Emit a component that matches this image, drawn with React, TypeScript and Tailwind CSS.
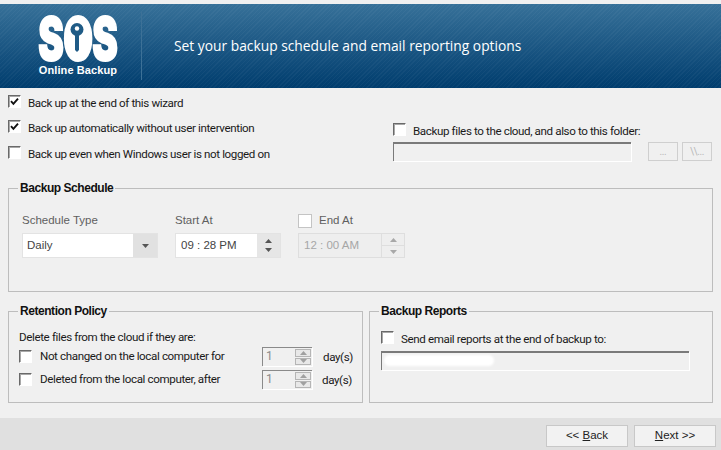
import React from "react";

function Check({ checked = false }: { checked?: boolean }) {
  return (
    <span className="flex h-[13px] w-[13px] shrink-0 items-center justify-center border-t border-l border-t-[#696969] border-l-[#696969] border-r border-b border-r-white border-b-white bg-white shadow-[inset_1px_1px_0_#a8a8a8]">
      {checked && (
        <svg width="9" height="9" viewBox="0 0 9 9">
          <path d="M1 4.2 L3.4 6.8 L8 1.6" fill="none" stroke="#111" strokeWidth="1.9" />
        </svg>
      )}
    </span>
  );
}

function Arrow({ up, color = "#555" }: { up?: boolean; color?: string }) {
  return (
    <svg width="7" height="4" viewBox="0 0 7 4">
      <path d={up ? "M3.5 0 L7 4 L0 4 Z" : "M0 0 L7 0 L3.5 4 Z"} fill={color} />
    </svg>
  );
}

function SmallSpin() {
  return (
    <div className="flex h-[19px] w-[50px] border-t border-l border-[#8a8a8a] shadow-[1px_1px_0_#fff]">
      <span className="flex-1 pl-[3px] text-[12px] leading-[17px] text-[#8b8b8b]">1</span>
      <div className="my-[1px] mr-[1px] flex w-[16px] flex-col gap-[1px]">
        <span className="flex flex-1 items-center justify-center border border-[#b5b5b5] bg-[#e8e8e8]">
          <Arrow up color="#a0a0a0" />
        </span>
        <span className="flex flex-1 items-center justify-center border border-[#b5b5b5] bg-[#e8e8e8]">
          <Arrow color="#a0a0a0" />
        </span>
      </div>
    </div>
  );
}

function Legend({ children }: { children: React.ReactNode }) {
  return (
    <legend className="ml-[9px] px-[2px] font-['Liberation_Sans',Arial,sans-serif] text-[12px] font-bold leading-[14px] tracking-[-0.45px] text-[#111]">
      {children}
    </legend>
  );
}

function CheckLabel({ checked, text, className = "" }: { checked?: boolean; text: string; className?: string }) {
  return (
    <label className={`flex h-[13px] items-center gap-[7px] ${className}`}>
      <Check checked={checked} />
      <span className="mt-[4px] whitespace-nowrap">{text}</span>
    </label>
  );
}

export default function App() {
  return (
    <div className="flex h-[450px] w-[721px] flex-col overflow-hidden bg-[#f0f0f0] font-['Roboto',Arial,sans-serif] text-[11.6px] tracking-[-0.38px] text-[#1a1a1a]">
      <div className="h-[4px] bg-[#f0f0f0]" />
      <header className="flex h-[84px] items-center bg-[repeating-linear-gradient(135deg,rgba(255,255,255,0.035)_0_1px,transparent_1px_3px),linear-gradient(to_bottom,#377199,#003d6e)] tracking-normal">
        <div className="ml-[38px] flex w-[80px] flex-col items-center text-white">
          <div className="relative flex h-[45px] w-[80px] items-center justify-center">
            <span className="block origin-center scale-x-[0.65] whitespace-nowrap font-['Inter',sans-serif] text-[59px] font-black leading-[45px] tracking-[-1px] [-webkit-text-stroke:2px_white]">SOS</span>
            <svg className="absolute left-[30px] top-[6px]" width="18" height="31" viewBox="0 0 18 31">
              <rect x="2" y="0" width="14" height="31" fill="#fff" />
              <circle cx="9" cy="7.5" r="6.5" fill="#1f5b86" />
              <circle cx="9" cy="6.5" r="2.2" fill="#fff" />
              <path d="M7 13 H11 V28 L9 30 L7 28 Z" fill="#1f5b86" />
            </svg>
          </div>
          <span className="mt-[3px] whitespace-nowrap font-['Liberation_Sans',Arial,sans-serif] text-[11px] font-bold leading-[13px] tracking-[0.1px]">Online Backup</span>
        </div>
        <div className="ml-[23px] h-[68px] w-[1px] bg-[#3d7197]" />
        <h1 className="ml-[32px] pt-[1px] font-['Open_Sans',sans-serif] text-[13.8px] font-normal text-white">
          Set your backup schedule and email reporting options
        </h1>
      </header>

      <main className="flex flex-1 flex-col px-[8px]">
        <div className="flex h-[93px]">
          <div className="flex w-[385px] flex-col pt-[7px]">
            <CheckLabel checked text="Back up at the end of this wizard" />
            <CheckLabel checked className="mt-[12px]" text="Back up automatically without user intervention" />
            <CheckLabel className="mt-[13px]" text="Back up even when Windows user is not logged on" />
          </div>
          <div className="flex flex-col pt-[35px]">
            <CheckLabel text="Backup files to the cloud, and also to this folder:" />
            <div className="mt-[6px] flex items-start">
              <div className="h-[19px] w-[238px] border-t-2 border-l border-[#7a7a7a] shadow-[1px_1px_0_#fff]" />
              <button className="ml-[17px] h-[19px] w-[30px] border border-[#cfcfcf] text-[10px] leading-[15px] text-[#b9b9b9]">...</button>
              <button className="ml-[4px] h-[19px] w-[30px] border border-[#cfcfcf] text-[10px] leading-[15px] text-[#b9b9b9]">\\...</button>
            </div>
          </div>
        </div>

        <fieldset className="h-[111px] w-[705px] border border-[#bdbdbd]">
          <Legend>Backup Schedule</Legend>
          <div className="mt-[17px] flex pl-[13px] font-['Liberation_Sans',Arial,sans-serif] text-[11.5px] tracking-normal">
            <div className="w-[153px]">
              <div className="h-[18px] pt-[1px] leading-[14px] text-[#5f5f5f]">Schedule Type</div>
              <div className="mt-[3px] flex h-[25px] w-[136px] items-center border border-[#e3e3e3] bg-white">
                <span className="flex-1 pl-[4px] text-[#444]">Daily</span>
                <span className="flex h-full w-[24px] items-center justify-center bg-[#e1e1e1]"><Arrow color="#555" /></span>
              </div>
            </div>
            <div className="w-[123px]">
              <div className="h-[18px] pt-[1px] leading-[14px] text-[#5f5f5f]">Start At</div>
              <div className="mt-[3px] flex h-[25px] w-[106px] items-center border border-[#e3e3e3] bg-white">
                <span className="flex-1 pl-[5px] text-[#444]">09 : 28 PM</span>
                <span className="flex h-full w-[23px] flex-col items-center justify-around bg-[#e6e6e6] py-[3px]"><Arrow up /><Arrow /></span>
              </div>
            </div>
            <div>
              <div className="flex h-[18px] items-center gap-[7px]">
                <span className="h-[14px] w-[14px] border border-[#c4c4c4] bg-white" />
                <span className="text-[#5f5f5f]">End At</span>
              </div>
              <div className="mt-[3px] flex h-[25px] w-[107px] items-center border border-[#dedede] bg-[#eeeeee]">
                <span className="flex-1 pl-[5px] text-[#a6a6a6]">12 : 00 AM</span>
                <span className="flex h-full w-[23px] flex-col items-stretch border-l border-[#dedede]">
                  <span className="flex flex-1 items-center justify-center border-b border-[#dedede]"><Arrow up color="#a8a8a8" /></span>
                  <span className="flex flex-1 items-center justify-center"><Arrow color="#a8a8a8" /></span>
                </span>
              </div>
            </div>
          </div>
        </fieldset>

        <div className="mt-[12px] flex gap-[6px]">
          <fieldset className="h-[99px] w-[355px] border border-[#bdbdbd]">
            <Legend>Retention Policy</Legend>
            <div className="pl-[10px]">
              <div className="mt-[13px] leading-[13px]">Delete files from the cloud if they are:</div>
              <div className="mt-[3px] flex h-[19px] items-center">
                <Check />
                <span className="ml-[8px] w-[222px]">Not changed on the local computer for</span>
                <SmallSpin />
                <span className="ml-[11px] mt-[2px]">day(s)</span>
              </div>
              <div className="mt-[4px] flex h-[19px] items-center">
                <Check />
                <span className="ml-[8px] w-[222px]">Deleted from the local computer, after</span>
                <SmallSpin />
                <span className="ml-[10px] mt-[2px]">day(s)</span>
              </div>
            </div>
          </fieldset>
          <fieldset className="h-[99px] w-[344px] border border-[#bdbdbd]">
            <Legend>Backup Reports</Legend>
            <div className="pl-[11px]">
              <CheckLabel className="mt-[13px]" text="Send email reports at the end of backup to:" />
              <div className="relative mt-[7px] h-[19px] w-[308px] border-t-2 border-l border-[#7a7a7a] shadow-[1px_1px_0_#fff]">
                <span className="absolute left-[2px] top-[2px] h-[11px] w-[110px] rounded-full bg-white blur-[1px]" />
              </div>
            </div>
          </fieldset>
        </div>
      </main>

      <footer className="flex h-[32px] items-start justify-end gap-[6px] bg-[#e0e0e0] pr-[5px] pt-[7px] font-['Liberation_Sans',Arial,sans-serif] tracking-normal">
        <button className="h-[22px] w-[82px] border border-[#c8c8c8] bg-[#f2f2f2] text-[11.5px] text-[#222]">&lt;&lt; <span className="underline">B</span>ack</button>
        <button className="h-[22px] w-[82px] border border-[#c8c8c8] bg-[#f2f2f2] text-[11.5px] text-[#222]"><span className="underline">N</span>ext &gt;&gt;</button>
      </footer>
    </div>
  );
}
